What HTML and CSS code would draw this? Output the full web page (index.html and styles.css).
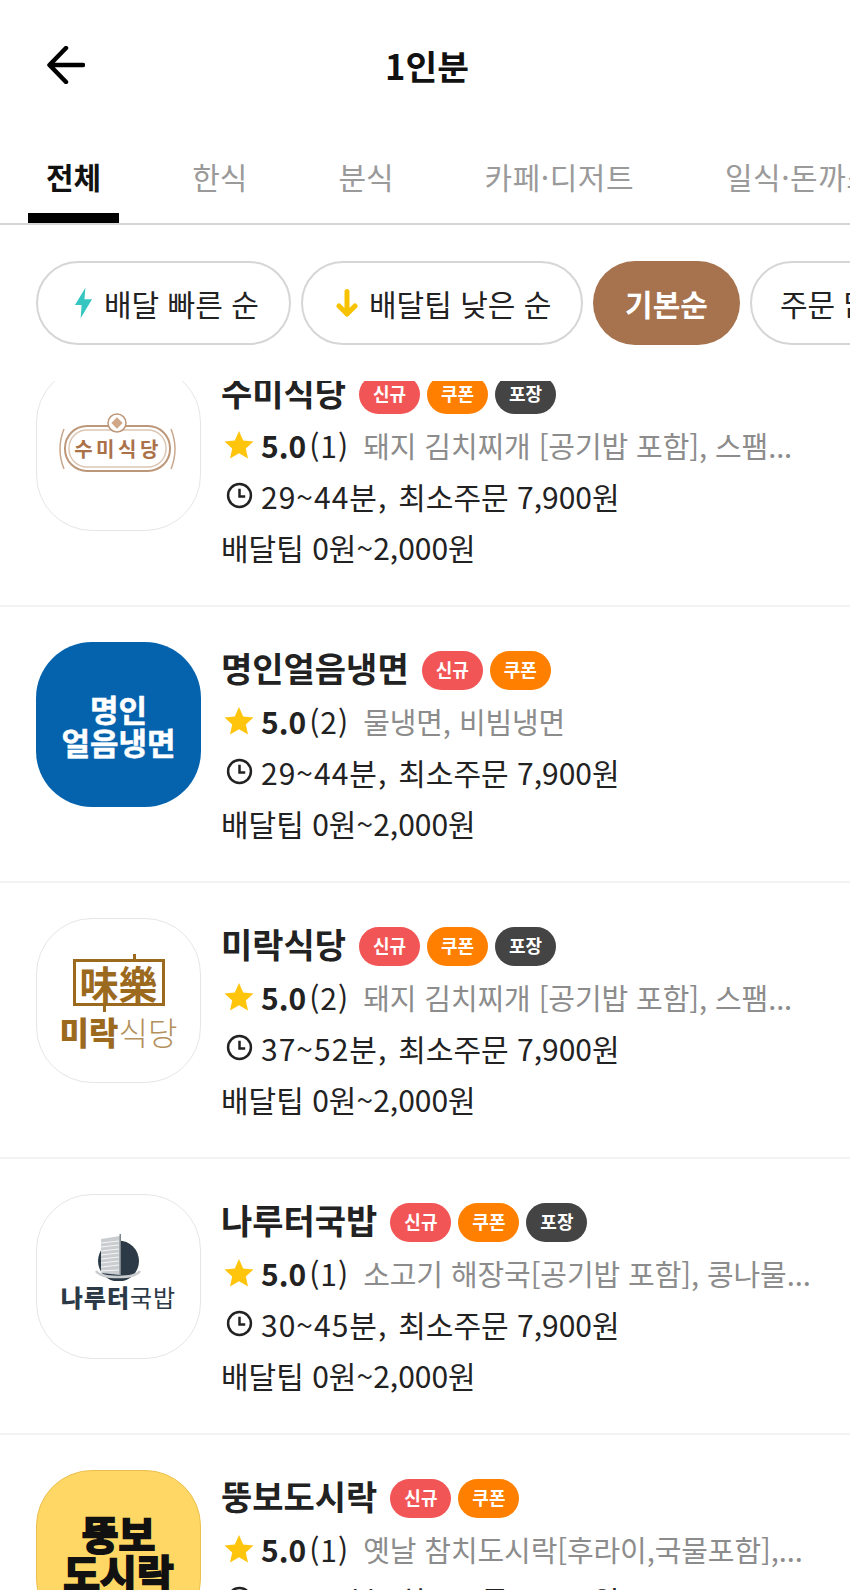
FILE: index.html

```html
<!DOCTYPE html>
<html lang="ko">
<head>
    <meta charset="UTF-8">
    <title>1인분</title>
    <link rel="stylesheet" href="styles.css">
</head>
<body>
    <header class="topbar">
        <svg class="back" width="38" height="38" viewBox="0 0 38 38"><path d="M19 2 L2.500 19 L19 36 M3 19 H36" fill="none" stroke="#000" stroke-width="4.500" stroke-linecap="round" stroke-linejoin="round"/></svg>
        <h1 class="title">1인분</h1>
    </header>

    <nav class="tabs">
        <span class="tab active">전체</span>
        <span class="tab">한식</span>
        <span class="tab">분식</span>
        <span class="tab tab-wide">카페·디저트</span>
        <span class="tab tab-wide">일식·돈까스</span>
    </nav>

    <div class="chips">
        <span class="chip chip-first">
            <svg width="19" height="32" viewBox="0 0 20 32"><path d="M12 0 L1 18 H8 L7 32 L19 12 H11 Z" fill="#35c6c1"/></svg>
            배달 빠른 순
        </span>
        <span class="chip chip-second">
            <svg width="22" height="28" viewBox="0 0 22 28"><path d="M11 2.500 V25 M3 17 L11 25 L19 17" fill="none" stroke="#f7c200" stroke-width="5" stroke-linecap="round" stroke-linejoin="round"/></svg>
            배달팁 낮은 순
        </span>
        <span class="chip chip-on">기본순</span>
        <span class="chip chip-last">주문 많은 순</span>
    </div>

    <main class="list">
        <div class="list-inner">
            <article class="shop">
                <div class="logo logo-line">
                    <svg width="162" height="162" viewBox="0 0 162 162">
                        <path d="M27 62 Q19 82 27 102 M134 62 Q142 82 134 102" fill="none" stroke="#c9a78c" stroke-width="1.500"/>
                        <rect x="28" y="59" width="105" height="45" rx="22" fill="#fff" stroke="#bd9779" stroke-width="2"/>
                        <rect x="32" y="63" width="97" height="37" rx="18" fill="none" stroke="#dcc6b4" stroke-width="1.500"/>
                        <circle cx="80" cy="56" r="9" fill="#fff" stroke="#bd9779" stroke-width="1.500"/>
                        <rect x="76" y="52" width="8" height="8" fill="#d0a888" transform="rotate(45 80 56)"/>
                        <text class="logo-sumi" x="81" y="90" text-anchor="middle">수미식당</text>
                    </svg>
                </div>
                <div class="info">
                    <div class="name-row"><span class="name">수미식당</span><span class="badge new">신규</span><span class="badge coupon">쿠폰</span><span class="badge pack">포장</span></div>
                    <div class="line rate-row">
                        <svg class="star" width="30" height="29" viewBox="0 0 30 29"><path d="M15 1 L19.200 10.500 L29.500 11.500 L21.800 18.500 L24 28.500 L15 23.300 L6 28.500 L8.200 18.500 L.5 11.500 L10.800 10.500 Z" fill="#ffc40c"/></svg>
                        <b class="score">5.0</b><span class="count">(1)</span><span class="menu">돼지 김치찌개 [공기밥 포함], 스팸...</span>
                    </div>
                    <div class="line time-row">
                        <svg class="clock" width="27" height="27" viewBox="0 0 26 26"><circle cx="13" cy="13" r="11" fill="none" stroke="#222" stroke-width="2.400"/><path d="M13 6.500 V14 H18.500" fill="none" stroke="#222" stroke-width="2.400"/></svg>
                        <span class="eta">29~44분,</span><span class="min">최소주문 7,900원</span>
                    </div>
                    <div class="line">배달팁 0원~2,000원</div>
                </div>
            </article>

            <article class="shop">
                <div class="logo logo-blue"><span>명인</span><span>얼음냉면</span></div>
                <div class="info">
                    <div class="name-row"><span class="name">명인얼음냉면</span><span class="badge new">신규</span><span class="badge coupon">쿠폰</span></div>
                    <div class="line rate-row">
                        <svg class="star" width="30" height="29" viewBox="0 0 30 29"><path d="M15 1 L19.200 10.500 L29.500 11.500 L21.800 18.500 L24 28.500 L15 23.300 L6 28.500 L8.200 18.500 L.5 11.500 L10.800 10.500 Z" fill="#ffc40c"/></svg>
                        <b class="score">5.0</b><span class="count">(2)</span><span class="menu">물냉면, 비빔냉면</span>
                    </div>
                    <div class="line time-row">
                        <svg class="clock" width="27" height="27" viewBox="0 0 26 26"><circle cx="13" cy="13" r="11" fill="none" stroke="#222" stroke-width="2.400"/><path d="M13 6.500 V14 H18.500" fill="none" stroke="#222" stroke-width="2.400"/></svg>
                        <span class="eta">29~44분,</span><span class="min">최소주문 7,900원</span>
                    </div>
                    <div class="line">배달팁 0원~2,000원</div>
                </div>
            </article>

            <article class="shop">
                <div class="logo logo-line logo-mirak">
                    <div class="hanja">味樂</div>
                    <div class="mirak-name"><b>미락</b>식당</div>
                </div>
                <div class="info">
                    <div class="name-row"><span class="name">미락식당</span><span class="badge new">신규</span><span class="badge coupon">쿠폰</span><span class="badge pack">포장</span></div>
                    <div class="line rate-row">
                        <svg class="star" width="30" height="29" viewBox="0 0 30 29"><path d="M15 1 L19.200 10.500 L29.500 11.500 L21.800 18.500 L24 28.500 L15 23.300 L6 28.500 L8.200 18.500 L.5 11.500 L10.800 10.500 Z" fill="#ffc40c"/></svg>
                        <b class="score">5.0</b><span class="count">(2)</span><span class="menu">돼지 김치찌개 [공기밥 포함], 스팸...</span>
                    </div>
                    <div class="line time-row">
                        <svg class="clock" width="27" height="27" viewBox="0 0 26 26"><circle cx="13" cy="13" r="11" fill="none" stroke="#222" stroke-width="2.400"/><path d="M13 6.500 V14 H18.500" fill="none" stroke="#222" stroke-width="2.400"/></svg>
                        <span class="eta">37~52분,</span><span class="min">최소주문 7,900원</span>
                    </div>
                    <div class="line">배달팁 0원~2,000원</div>
                </div>
            </article>

            <article class="shop">
                <div class="logo logo-line logo-naru">
                    <svg width="52" height="48" viewBox="0 0 52 48">
                        <circle cx="26.500" cy="28" r="20.500" fill="#2b3a46"/>
                        <path d="M9 6 L28 3 V42 L9 40 Z" fill="#c9cdd0"/>
                        <path d="M9 10 L27 8 M9 14 L27 12 M9 18 L27 16 M9 22 L27 20 M9 26 L27 24 M9 30 L27 28 M9 34 L27 32 M9 38 L27 37" stroke="#f4f4f4" stroke-width="1.200"/>
                        <path d="M27.500 1 V42 H29 V1 Z" fill="#7d868c"/>
                        <path d="M4 38 Q8 44 26 44 Q44 44 48 38" fill="none" stroke="#c9cdd0" stroke-width="2.500"/>
                    </svg>
                    <div class="naru-name"><b>나루터</b>국밥</div>
                </div>
                <div class="info">
                    <div class="name-row"><span class="name">나루터국밥</span><span class="badge new">신규</span><span class="badge coupon">쿠폰</span><span class="badge pack">포장</span></div>
                    <div class="line rate-row">
                        <svg class="star" width="30" height="29" viewBox="0 0 30 29"><path d="M15 1 L19.200 10.500 L29.500 11.500 L21.800 18.500 L24 28.500 L15 23.300 L6 28.500 L8.200 18.500 L.5 11.500 L10.800 10.500 Z" fill="#ffc40c"/></svg>
                        <b class="score">5.0</b><span class="count">(1)</span><span class="menu">소고기 해장국[공기밥 포함], 콩나물...</span>
                    </div>
                    <div class="line time-row">
                        <svg class="clock" width="27" height="27" viewBox="0 0 26 26"><circle cx="13" cy="13" r="11" fill="none" stroke="#222" stroke-width="2.400"/><path d="M13 6.500 V14 H18.500" fill="none" stroke="#222" stroke-width="2.400"/></svg>
                        <span class="eta">30~45분,</span><span class="min">최소주문 7,900원</span>
                    </div>
                    <div class="line">배달팁 0원~2,000원</div>
                </div>
            </article>

            <article class="shop">
                <div class="logo logo-yellow"><span>뚱보</span><span>도시락</span></div>
                <div class="info">
                    <div class="name-row"><span class="name">뚱보도시락</span><span class="badge new">신규</span><span class="badge coupon">쿠폰</span></div>
                    <div class="line rate-row">
                        <svg class="star" width="30" height="29" viewBox="0 0 30 29"><path d="M15 1 L19.200 10.500 L29.500 11.500 L21.800 18.500 L24 28.500 L15 23.300 L6 28.500 L8.200 18.500 L.5 11.500 L10.800 10.500 Z" fill="#ffc40c"/></svg>
                        <b class="score">5.0</b><span class="count">(1)</span><span class="menu">옛날 참치도시락[후라이,국물포함],...</span>
                    </div>
                    <div class="line time-row">
                        <svg class="clock" width="27" height="27" viewBox="0 0 26 26"><circle cx="13" cy="13" r="11" fill="none" stroke="#222" stroke-width="2.400"/><path d="M13 6.500 V14 H18.500" fill="none" stroke="#222" stroke-width="2.400"/></svg>
                        <span class="eta">29~44분,</span><span class="min">최소주문 7,900원</span>
                    </div>
                </div>
            </article>
        </div>
    </main>
</body>
</html>
```

FILE: styles.css

```css
* {
    box-sizing: border-box;
}

html, body {
    margin: 0;
    height: 1590px;
    overflow: hidden;
}

body {
    font-family: "Noto Sans CJK KR", "Noto Sans", sans-serif;
    background: #fff;
    color: #222;
    width: 850px;
}

.topbar {
    position: relative;
    height: 130px;
    padding-top: 46px;
    padding-left: 47px;
}

.back {
    display: block;
}

.title {
    position: absolute;
    top: 40px;
    left: 2px;
    width: 100%;
    margin: 0;
    text-align: center;
    font-size: 34.500px;
    line-height: 50px;
    font-weight: 700;
    color: #111;
}

.tabs {
    display: flex;
    gap: 55px;
    height: 95px;
    padding-left: 28px;
    border-bottom: 2px solid #d6d6d6;
    overflow: hidden;
    white-space: nowrap;
}

.tab {
    flex: none;
    height: 93px;
    padding: 24px 18px 0;
    font-size: 30px;
    line-height: 44px;
    color: #9a9a9a;
}

.tab-wide {
    letter-spacing: 0.500px;
}

.tab.active {
    font-weight: 700;
    color: #111;
    border-bottom: 10px solid #000;
}

.chips {
    display: flex;
    gap: 10px;
    height: 156px;
    padding: 36px 0 0 36px;
    overflow: hidden;
    white-space: nowrap;
}

.chip {
    flex: none;
    display: flex;
    align-items: center;
    gap: 11px;
    height: 84px;
    border: 2px solid #d6d6d6;
    border-radius: 42px;
    font-size: 30px;
    color: #222;
    background: #fff;
}

.chip-first {
    width: 255px;
    padding-left: 36px;
}

.chip-second {
    width: 282px;
    padding-left: 33px;
}

.chip-on {
    width: 147px;
    justify-content: center;
    border: none;
    background: #a6734e;
    color: #fff;
    font-weight: 700;
}

.chip-last {
    padding: 0 28px;
}

.list {
    height: 1209px;
    overflow: hidden;
}

.list-inner {
    margin-top: -50px;
}

.shop {
    display: flex;
    height: 276px;
    padding: 35px 20px 0 36px;
    border-bottom: 2px solid #f2f2f2;
}

.logo {
    flex: none;
    width: 165px;
    height: 165px;
    border-radius: 56px;
    overflow: hidden;
}

.logo-line {
    border: 1.5px solid #e6e6e6;
}

.logo-line svg {
    display: block;
}

.logo-sumi {
    font-size: 20px;
    font-weight: 700;
    letter-spacing: 3.500px;
    fill: #ab7148;
}

.logo-blue, .logo-yellow {
    display: flex;
    flex-direction: column;
    align-items: center;
    justify-content: center;
    font-weight: 700;
}

.logo-blue {
    background: #0563ae;
    color: #fff;
    font-size: 31px;
    line-height: 33px;
    -webkit-text-stroke: 0.500px #fff;
}

.logo-yellow {
    background: #ffd764;
    border: 1.5px solid #ecc04f;
    color: #111;
    font-size: 40px;
    line-height: 39px;
    -webkit-text-stroke: 2px #111;
}

.logo-mirak {
    display: flex;
    flex-direction: column;
    align-items: center;
    padding-top: 40px;
    color: #9c6a1e;
}

.hanja {
    position: relative;
    flex: none;
    width: 92px;
    height: 47px;
    border: 3px solid #9c6a1e;
    font-size: 39px;
    line-height: 40px;
    font-weight: 700;
    text-align: center;
    white-space: nowrap;
}

.hanja::before, .hanja::after {
    content: "";
    position: absolute;
    width: 3px;
    height: 6px;
    background: #9c6a1e;
}

.hanja::before {
    left: 27px;
    bottom: -9px;
}

.hanja::after {
    right: 26px;
    top: -8px;
}

.mirak-name {
    margin-top: 5px;
    font-size: 32px;
    line-height: 40px;
    font-weight: 300;
    color: #b4905c;
    white-space: nowrap;
}

.mirak-name b {
    font-weight: 900;
    color: #9c6a1e;
}

.logo-naru {
    display: flex;
    flex-direction: column;
    align-items: center;
    padding-top: 38px;
}

.logo-naru svg {
    flex: none;
    margin-left: -2px;
}

.naru-name {
    font-size: 24px;
    line-height: 32px;
    letter-spacing: 1px;
    color: #2b3a46;
    white-space: nowrap;
}

.naru-name b {
    font-weight: 900;
}

.info {
    margin-left: 20px;
    white-space: nowrap;
}

.name-row {
    display: flex;
    align-items: center;
    gap: 7px;
    height: 50px;
    margin-bottom: 3px;
}

.name {
    margin-right: 6px;
    font-size: 34px;
    font-weight: 700;
    color: #222;
}

.badge {
    width: 61px;
    height: 39px;
    margin-top: 6px;
    border-radius: 20px;
    font-size: 18px;
    line-height: 37px;
    font-weight: 700;
    text-align: center;
    color: #fff;
}

.new {
    background: #f25555;
}

.coupon {
    background: #ff8000;
}

.pack {
    background: #444;
}

.line {
    display: flex;
    align-items: center;
    height: 51px;
    font-size: 30px;
    color: #222;
}

.star {
    margin: 0 7px 0 3px;
}

.score {
    font-size: 30px;
    font-weight: 700;
}

.count {
    margin-left: 3px;
    margin-right: 14px;
    letter-spacing: 1px;
}

.menu {
    font-size: 29px;
    letter-spacing: -0.1px;
    color: #8c8c8c;
}

.clock {
    margin: 0 8px 0 5px;
}

.eta {
    letter-spacing: 1px;
}

.min {
    margin-left: 11px;
}
```
